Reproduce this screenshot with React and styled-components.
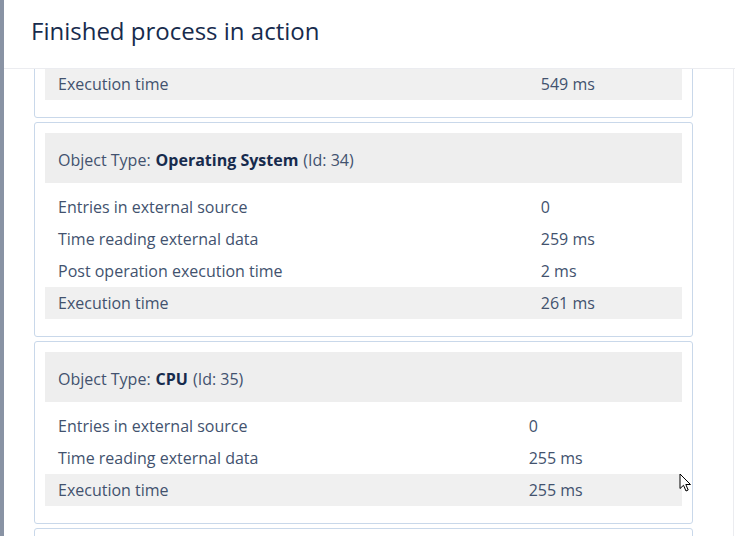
import React, { useLayoutEffect, useRef } from "react";
import styled, { createGlobalStyle } from "styled-components";

const GlobalStyle = createGlobalStyle`
  html, body {
    margin: 0;
    padding: 0;
    background: #fff;
    overflow: hidden;
  }
  body {
    font-family: "Open Sans", "Noto Sans", sans-serif;
    color: #42526e;
  }
`;

const Screen = styled.div`
  position: relative;
  display: flex;
  width: 735px;
  height: 536px;
  overflow: hidden;
`;

const Backdrop = styled.div`
  width: 4px;
  flex-shrink: 0;
  background: #8993a4;
`;

const Modal = styled.div`
  flex: 1;
  min-width: 0;
  display: flex;
  flex-direction: column;
  background: #fff;
`;

const Header = styled.header`
  box-sizing: border-box;
  height: 69px;
  flex-shrink: 0;
  display: flex;
  align-items: center;
  padding: 0 0 8px 27px;
  border-bottom: 1px solid #ebecf0;
`;

const Title = styled.h1`
  margin: 0;
  font-size: 24px;
  font-weight: 400;
  color: #172b4d;
`;

const Body = styled.div`
  position: relative;
  flex: 1;
  width: 730px;
  box-sizing: border-box;
  overflow-y: auto;
  scrollbar-width: none;
  padding: 0 40px 10px 30px;
  border-right: 1px solid #ebecf0;
`;

const Card = styled.section`
  border: 1px solid #c9d8ea;
  border-radius: 3px;
  padding: 10px 10px 17px;
  margin-bottom: 4px;
`;

const CardHeader = styled.div`
  box-sizing: border-box;
  height: 50px;
  display: flex;
  align-items: center;
  padding: 3px 13px 0;
  margin-bottom: 8px;
  background: #eeeeee;
  font-size: 16px;
  color: #42526e;

  b {
    font-weight: 700;
    color: #172b4d;
    margin: 0 5px;
  }
`;

const Table = styled.table`
  width: 100%;
  border-collapse: collapse;
  font-size: 16px;
`;

const Row = styled.tr`
  height: 32px;
  background: ${(p) => (p.$total ? "#f0f0f0" : "transparent")};
`;

const Cell = styled.td`
  padding: 0 13px;
  white-space: nowrap;
  color: #42526e;
`;

const Cursor = styled.svg`
  position: absolute;
  left: 679px;
  top: 473px;
`;

const processes = [
  {
    type: "Host",
    id: 33,
    rows: [
      ["Entries in external source", "0"],
      ["Time reading external data", "545 ms"],
      ["Post operation execution time", "4 ms"],
      ["Execution time", "549 ms"],
    ],
  },
  {
    type: "Operating System",
    id: 34,
    rows: [
      ["Entries in external source", "0"],
      ["Time reading external data", "259 ms"],
      ["Post operation execution time", "2 ms"],
      ["Execution time", "261 ms"],
    ],
  },
  {
    type: "CPU",
    id: 35,
    rows: [
      ["Entries in external source", "0"],
      ["Time reading external data", "255 ms"],
      ["Execution time", "255 ms"],
    ],
  },
  {
    type: "Memory",
    id: 36,
    rows: [
      ["Entries in external source", "0"],
      ["Time reading external data", "212 ms"],
      ["Execution time", "212 ms"],
    ],
  },
];

function ProcessCard({ process, cardRef }) {
  return (
    <Card ref={cardRef}>
      <CardHeader>
        Object Type:<b>{process.type}</b>(Id: {process.id})
      </CardHeader>
      <Table>
        <tbody>
          {process.rows.map(([label, value]) => (
            <Row key={label} $total={label === "Execution time"}>
              <Cell>{label}</Cell>
              <Cell>{value}</Cell>
            </Row>
          ))}
        </tbody>
      </Table>
    </Card>
  );
}

export default function App() {
  const bodyRef = useRef(null);
  const secondRef = useRef(null);

  useLayoutEffect(() => {
    if (bodyRef.current && secondRef.current) {
      bodyRef.current.scrollTop = secondRef.current.offsetTop - 53;
    }
  }, []);

  return (
    <>
      <GlobalStyle />
      <Screen>
        <Backdrop />
        <Modal>
          <Header>
            <Title>Finished process in action</Title>
          </Header>
          <Body ref={bodyRef}>
            {processes.map((p, i) => (
              <ProcessCard key={p.id} process={p} cardRef={i === 1 ? secondRef : null} />
            ))}
          </Body>
        </Modal>
        <Cursor width="13" height="20" viewBox="0 0 13 20">
          <path
            d="M1 1 L1 15.5 L4.5 12.3 L7 18 L9.2 17 L6.8 11.5 L11.5 11.5 Z"
            fill="#fff"
            stroke="#000"
            strokeWidth="1"
            strokeLinejoin="round"
          />
        </Cursor>
      </Screen>
    </>
  );
}
